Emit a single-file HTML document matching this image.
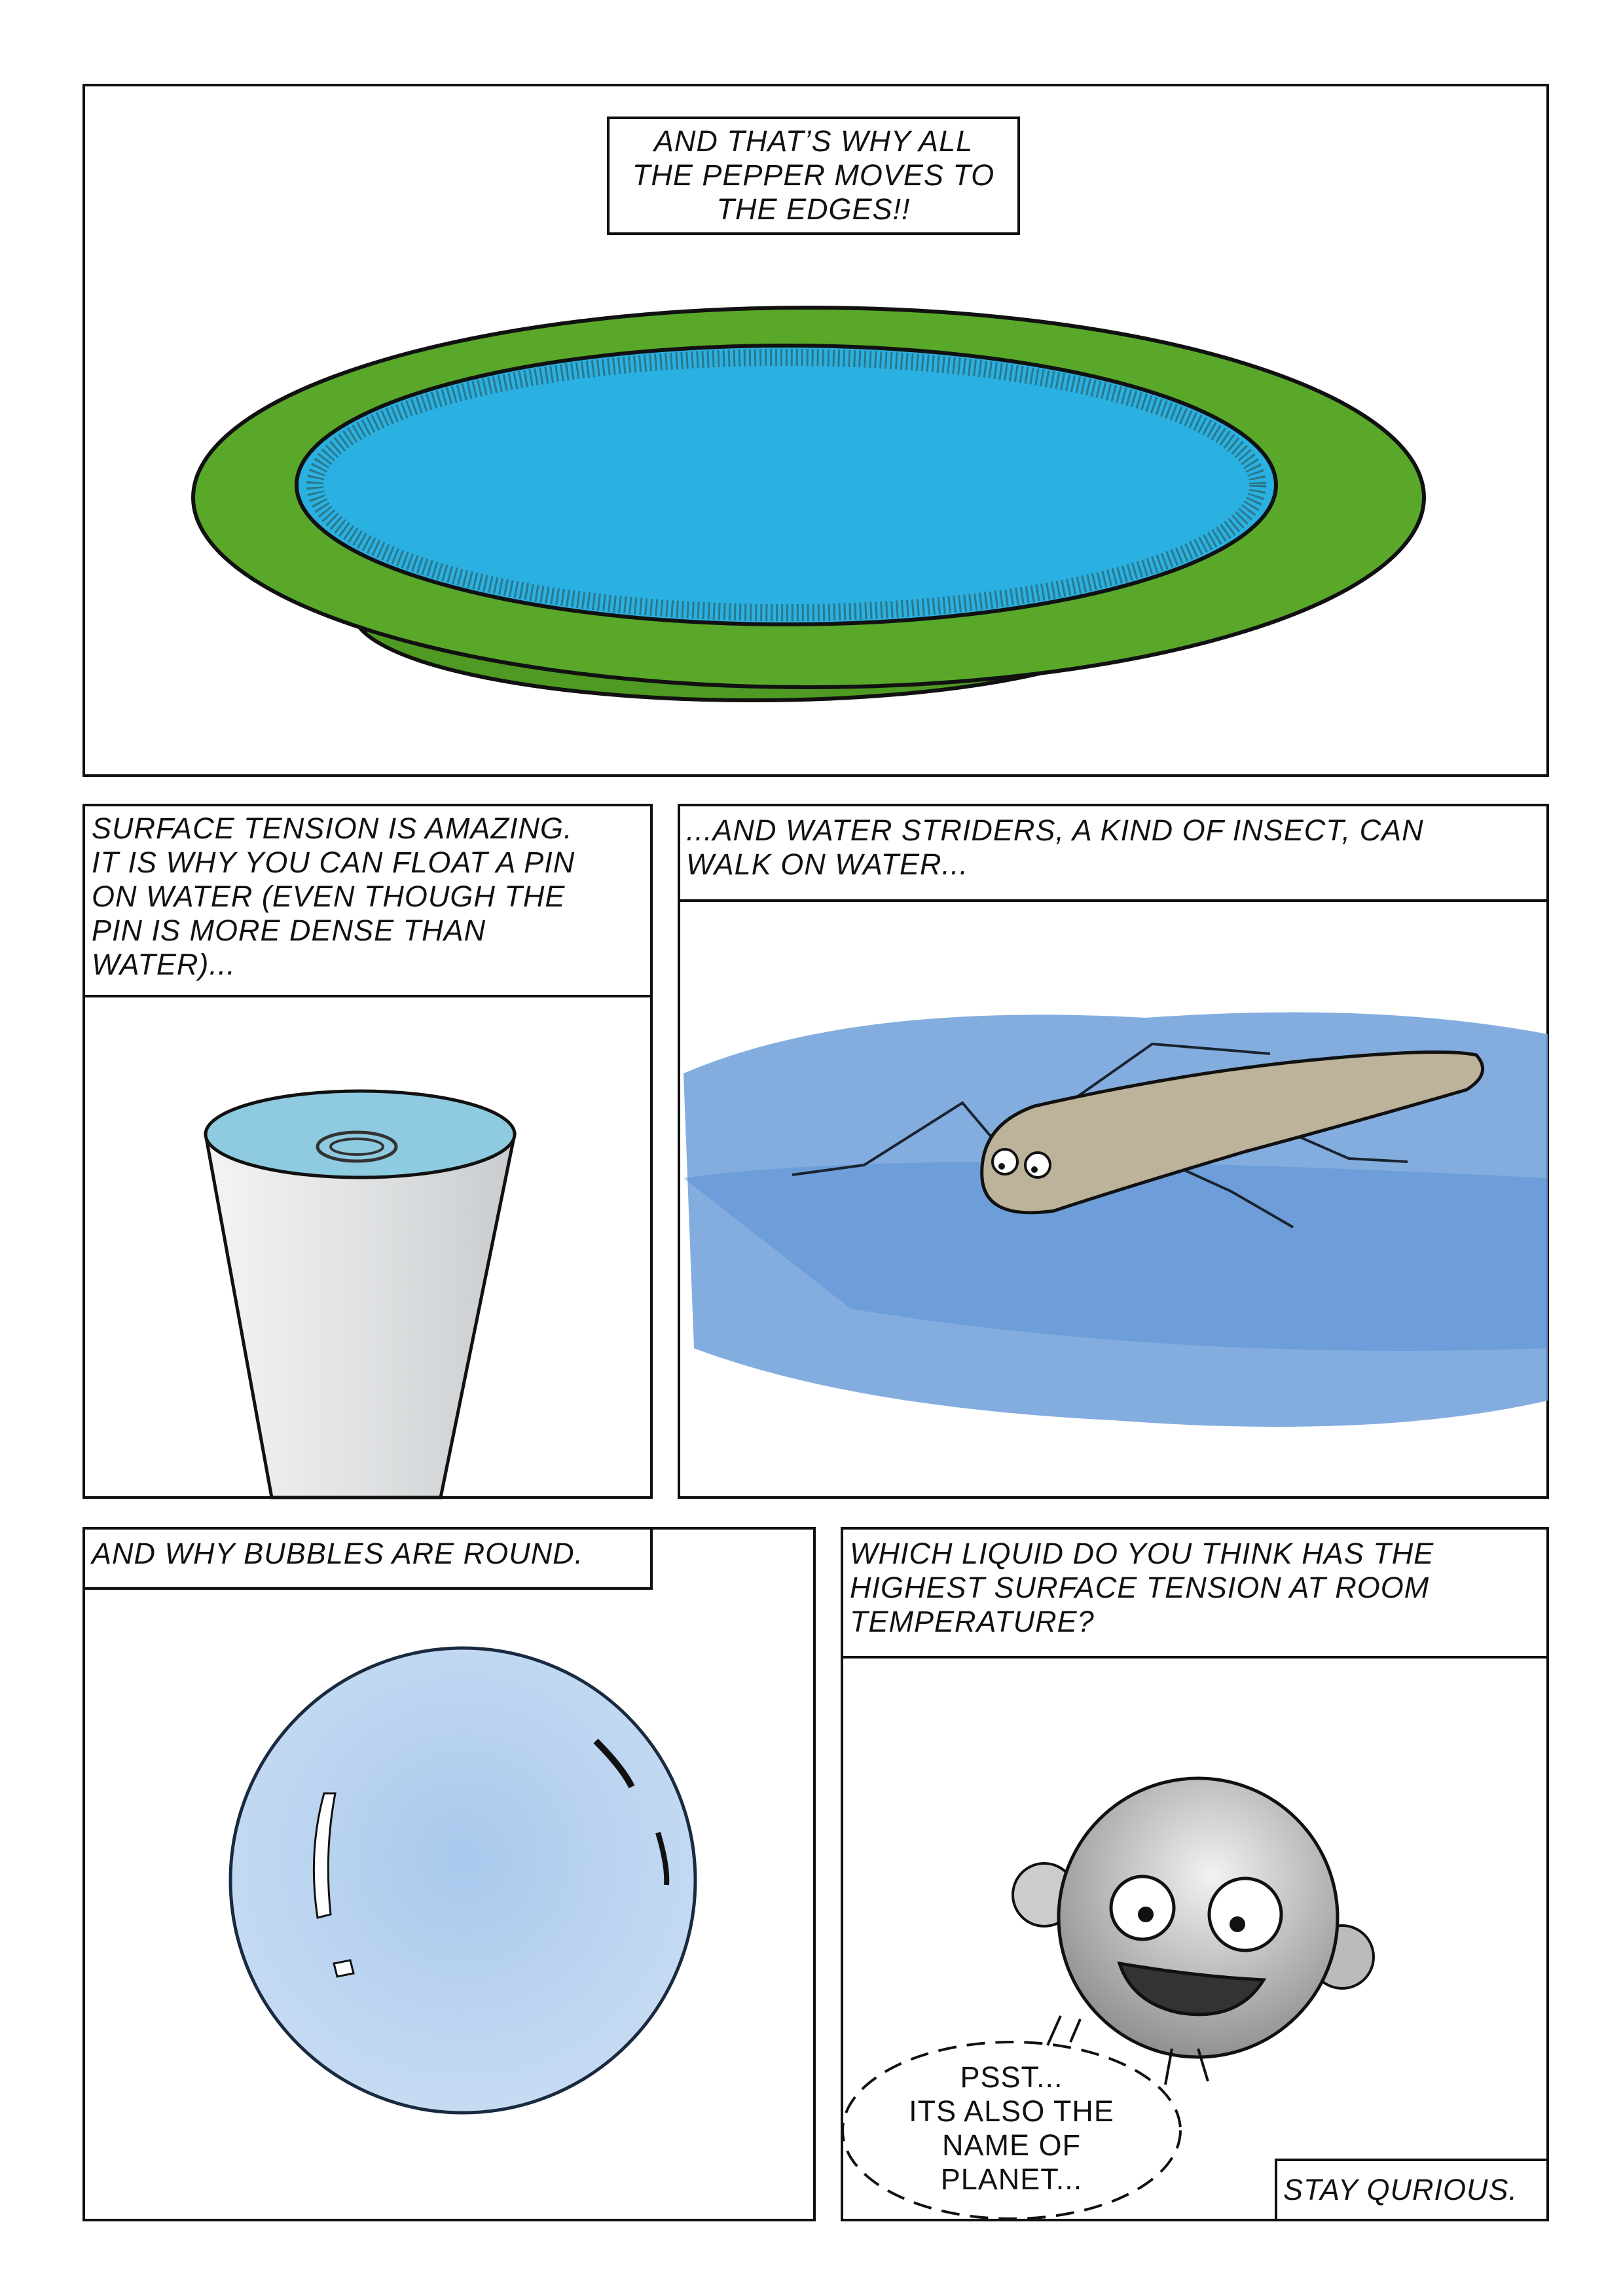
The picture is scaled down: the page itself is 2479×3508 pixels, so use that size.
<!DOCTYPE html>
<html><head><meta charset="utf-8"><style>
html,body{margin:0;padding:0;background:#fff;}
body{width:2479px;height:3508px;position:relative;overflow:hidden;}
.t{position:absolute;font-family:"Liberation Sans",sans-serif;font-style:italic;text-transform:uppercase;font-size:45px;line-height:52px;color:#111;letter-spacing:1px;}
</style></head><body>
<svg width="2479" height="3508" viewBox="0 0 2479 3508" style="position:absolute;left:0;top:0">
<defs>
<radialGradient id="moon" cx="0.55" cy="0.35" r="0.7"><stop offset="0" stop-color="#f2f2f2"/><stop offset="1" stop-color="#8a8a8a"/></radialGradient>
<radialGradient id="bub" cx="0.5" cy="0.45" r="0.6"><stop offset="0" stop-color="#a9c8ec"/><stop offset="1" stop-color="#c9ddf3"/></radialGradient>
<linearGradient id="cup" x1="0" x2="1"><stop offset="0" stop-color="#f4f4f4"/><stop offset="0.5" stop-color="#e0e2e4"/><stop offset="1" stop-color="#c9ccce"/></linearGradient>
</defs>
<g fill="none" stroke="#111" stroke-width="4">
<rect x="128" y="130" width="2236" height="1055"/>
<rect x="929" y="180" width="627" height="177"/>
<rect x="128" y="1230" width="867" height="1058"/>
<line x1="128" y1="1522" x2="995" y2="1522"/>
<rect x="1037" y="1230" width="1327" height="1058"/>
<line x1="1037" y1="1376" x2="2364" y2="1376"/>
<rect x="128" y="2335" width="1116" height="1057"/>
<rect x="128" y="2335" width="867" height="92"/>
<rect x="1286" y="2335" width="1078" height="1057"/>
<line x1="1286" y1="2532" x2="2364" y2="2532"/>
<rect x="1949" y="3300" width="415" height="92"/>
</g>
<!-- tray -->
<ellipse cx="1150" cy="935" rx="610" ry="135" fill="#4e9a22" stroke="#111" stroke-width="6"/>
<ellipse cx="1235" cy="760" rx="940" ry="290" fill="#5aa82a" stroke="#111" stroke-width="6"/>
<ellipse cx="1201" cy="741" rx="748" ry="213" fill="#2bb0e2" stroke="#111" stroke-width="6"/>
<ellipse cx="1201" cy="741" rx="720" ry="195" fill="none" stroke="#2a4a40" stroke-width="26" stroke-dasharray="3 5" opacity="0.55"/>
<!-- cup -->
<path d="M314 1733 L415 2288 L673 2288 L786 1733 Z" fill="url(#cup)" stroke="#111" stroke-width="5"/>
<ellipse cx="550" cy="1733" rx="236" ry="66" fill="#8fcbe0" stroke="#111" stroke-width="5"/>
<ellipse cx="545" cy="1752" rx="60" ry="22" fill="none" stroke="#333" stroke-width="5"/>
<ellipse cx="545" cy="1752" rx="40" ry="12" fill="none" stroke="#333" stroke-width="4"/>
<!-- strider water -->
<path d="M1044 1640 Q1300 1530 1750 1555 Q2100 1530 2364 1580 L2364 2140 Q2100 2200 1700 2170 Q1300 2150 1060 2060 Z" fill="#6d9fd9" opacity="0.85"/>
<path d="M1044 1800 Q1400 1750 2364 1800 L2364 2060 Q1800 2080 1300 2000 Z" fill="#4f88cf" opacity="0.4"/>
<g stroke="#1a2330" stroke-width="4" fill="none">
<path d="M1210 1795 L1320 1780 L1470 1685 L1525 1750"/>
<path d="M1625 1690 L1760 1595 L1940 1610"/>
<path d="M1770 1770 L1880 1820 L1975 1875"/>
<path d="M1900 1700 L2060 1770 L2150 1775"/>
</g>
<path d="M1500 1800 Q1495 1720 1580 1690 Q1800 1640 2000 1620 Q2200 1600 2255 1612 Q2280 1640 2240 1665 Q2050 1720 1900 1760 Q1700 1820 1610 1850 Q1505 1865 1500 1800 Z" fill="#bdb29a" stroke="#111" stroke-width="5"/>
<circle cx="1535" cy="1775" r="19" fill="#fff" stroke="#111" stroke-width="4"/>
<circle cx="1585" cy="1780" r="19" fill="#fff" stroke="#111" stroke-width="4"/>
<circle cx="1530" cy="1782" r="5" fill="#111"/><circle cx="1580" cy="1787" r="5" fill="#111"/>
<!-- bubble -->
<circle cx="707" cy="2873" r="355" fill="url(#bub)" stroke="#1a2a40" stroke-width="5"/>
<path d="M495 2740 Q470 2830 485 2930 L505 2925 Q495 2830 512 2740 Z" fill="#fff" stroke="#111" stroke-width="3"/>
<path d="M910 2660 Q950 2700 965 2730" stroke="#111" stroke-width="10" fill="none"/>
<path d="M1005 2800 Q1020 2850 1018 2880" stroke="#111" stroke-width="8" fill="none"/>
<path d="M510 3000 L535 2995 L540 3015 L515 3020 Z" fill="#fff" stroke="#111" stroke-width="3"/>
<!-- moon -->
<circle cx="1595" cy="2895" r="48" fill="#ccc" stroke="#111" stroke-width="4"/>
<circle cx="2050" cy="2990" r="48" fill="#bbb" stroke="#111" stroke-width="4"/>
<circle cx="1830" cy="2930" r="213" fill="url(#moon)" stroke="#111" stroke-width="5"/>
<circle cx="1745" cy="2915" r="48" fill="#fff" stroke="#111" stroke-width="5"/>
<circle cx="1902" cy="2925" r="55" fill="#fff" stroke="#111" stroke-width="5"/>
<circle cx="1750" cy="2925" r="12" fill="#111"/><circle cx="1890" cy="2940" r="12" fill="#111"/>
<path d="M1710 3000 Q1830 3020 1930 3025 Q1890 3090 1800 3075 Q1730 3060 1710 3000 Z" fill="#333" stroke="#111" stroke-width="5"/>
<path d="M1790 3130 L1780 3185 M1830 3130 L1845 3180" stroke="#111" stroke-width="4"/>
<ellipse cx="1545" cy="3255" rx="258" ry="135" fill="none" stroke="#111" stroke-width="4" stroke-dasharray="28 16"/>
<path d="M1600 3125 L1620 3080 M1635 3120 L1650 3085" stroke="#111" stroke-width="4"/>
</svg>
<div class="t" style="left:929px;top:190px;width:627px;text-align:center">And that’s why all<br>the pepper moves to<br>the edges!!</div>
<div class="t" style="left:140px;top:1240px">Surface tension is amazing.<br>It is why you can float a pin<br>on water (even though the<br>pin is more dense than<br>water)...</div>
<div class="t" style="left:1048px;top:1243px">...and water striders, a kind of insect, can<br>walk on water...</div>
<div class="t" style="left:140px;top:2348px">And why bubbles are round.</div>
<div class="t" style="left:1298px;top:2348px">Which liquid do you think has the<br>highest surface tension at room<br>temperature?</div>
<div class="t" style="left:1310px;top:3148px;width:470px;text-align:center;font-style:normal">Psst...<br>its also the<br>name of<br>planet...</div>
<div class="t" style="left:1960px;top:3320px">Stay qurious.</div>
</body></html>
